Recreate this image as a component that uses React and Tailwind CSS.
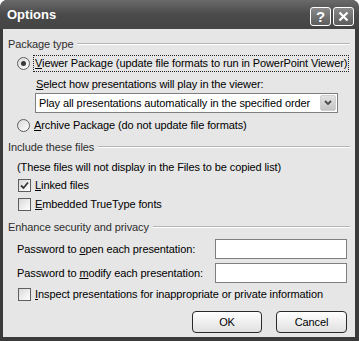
import React from 'react';

const font = { fontFamily: '"Liberation Sans", Arial, sans-serif' };

function GroupHeader({ label, className = '' }) {
    return (
        <div className={`flex items-center h-[16px] pl-[5px] pr-[5px] ${className}`}>
            <span className="text-[#2e2e2e] whitespace-nowrap">{label}</span>
            <div className="flex-1 ml-[4px] h-[2px] border-t border-[#b4b4b4] border-b border-b-white" />
        </div>
    );
}

function Radio({ checked }) {
    return (
        <div className="w-[13px] h-[13px] rounded-full border border-[#5e5e5e] bg-linear-to-br from-[#d8d8d8] to-white flex items-center justify-center shrink-0">
            {checked && <div className="w-[5px] h-[5px] rounded-full bg-[#3a3a3a]" />}
        </div>
    );
}

function Checkbox({ checked }) {
    return (
        <div className="w-[13px] h-[13px] border border-[#5e5e5e] bg-linear-to-br from-[#d9d9d9] to-white flex items-center justify-center shrink-0">
            {checked && (
                <svg width="9" height="9" viewBox="0 0 9 9">
                    <path d="M1 4.5 L3.5 7 L8 1.5" fill="none" stroke="#3a3a3a" strokeWidth="1.8" />
                </svg>
            )}
        </div>
    );
}

function U({ children }) {
    return <span className="underline underline-offset-[1px]">{children}</span>;
}

export default function App() {
    return (
        <div className="w-[359px] h-[341px] bg-[#3a3a3a] rounded-t-[7px] flex flex-col overflow-hidden text-[11px] tracking-[-0.1px] text-black leading-none" style={font}>
            {/* title bar */}
            <div className="h-[29px] shrink-0 flex items-center justify-between pl-[7px] pr-[5px] bg-linear-to-b from-[#6a6a6a] via-[#4a4a4a] to-[#444444] rounded-t-[7px]">
                <span className="text-white font-bold text-[13px] tracking-normal">Options</span>
                <div className="flex gap-[2px] pt-[3px]">
                    <div className="w-[21px] h-[19px] rounded-[3px] border border-white bg-linear-to-b from-[#8a8a8a] to-[#5c5c5c] flex items-center justify-center text-white font-bold text-[15px]">?</div>
                    <div className="w-[21px] h-[19px] rounded-[3px] border border-white bg-linear-to-b from-[#8a8a8a] to-[#5c5c5c] flex items-center justify-center">
                        <svg width="11" height="11" viewBox="0 0 11 11">
                            <path d="M1.5 1.5 L9.5 9.5 M9.5 1.5 L1.5 9.5" stroke="white" strokeWidth="2.2" />
                        </svg>
                    </div>
                </div>
            </div>

            {/* client area */}
            <div className="flex-1 ml-[3px] mr-[4px] mb-[4px] bg-[#e6e6e6] flex flex-col pt-[7px]">
                <GroupHeader label="Package type" />

                <div className="flex items-center h-[18px] mt-[2px] pl-[14px]">
                    <Radio checked />
                    <span className="ml-[3px] px-[1px] py-[2px] border border-dotted border-[#222] whitespace-nowrap">
                        <U>V</U>iewer Package (update file formats to run in PowerPoint Viewer)
                    </span>
                </div>

                <div className="flex items-center h-[16px] mt-[4px] pl-[33px]">
                    <span><U>S</U>elect how presentations will play in the viewer:</span>
                </div>

                <div className="ml-[32px] mr-[17px] mt-[1px] h-[20px] bg-white border border-[#7f7f7f] flex items-center pl-[3px] pr-[1px]">
                    <span className="flex-1 whitespace-nowrap">Play all presentations automatically in the specified order</span>
                    <div className="w-[16px] h-[16px] rounded-[2px] bg-linear-to-b from-[#e2e2e2] to-[#c4c4c4] border border-[#d0d0d0] flex items-center justify-center">
                        <svg width="8" height="6" viewBox="0 0 8 6">
                            <path d="M1 1 L4 4 L7 1" fill="none" stroke="#4a4a4a" strokeWidth="1.8" />
                        </svg>
                    </div>
                </div>

                <div className="flex items-center h-[18px] mt-[3px] pl-[14px]">
                    <Radio />
                    <span className="ml-[4px] whitespace-nowrap">
                        <U>A</U>rchive Package (do not update file formats)
                    </span>
                </div>

                <GroupHeader label="Include these files" className="mt-[5px]" />

                <div className="flex items-center h-[16px] mt-[4px] pl-[14px]">
                    <span>(These files will not display in the Files to be copied list)</span>
                </div>

                <div className="flex items-center h-[18px] mt-[1px] pl-[15px]">
                    <Checkbox checked />
                    <span className="ml-[4px]"><U>L</U>inked files</span>
                </div>

                <div className="flex items-center h-[18px] mt-[1px] pl-[15px]">
                    <Checkbox />
                    <span className="ml-[4px]"><U>E</U>mbedded TrueType fonts</span>
                </div>

                <GroupHeader label="Enhance security and privacy" className="mt-[6px]" />

                <div className="flex items-center h-[20px] mt-[4px] pl-[14px] pr-[8px]">
                    <span className="flex-1">Password to <U>o</U>pen each presentation:</span>
                    <div className="w-[132px] h-[20px] bg-white border border-[#7f7f7f]" />
                </div>

                <div className="flex items-center h-[20px] mt-[4px] pl-[14px] pr-[8px]">
                    <span className="flex-1">Password to <U>m</U>odify each presentation:</span>
                    <div className="w-[132px] h-[20px] bg-white border border-[#7f7f7f]" />
                </div>

                <div className="flex items-center h-[18px] mt-[2px] pl-[15px]">
                    <Checkbox />
                    <span className="ml-[4px] whitespace-nowrap"><U>I</U>nspect presentations for inappropriate or private information</span>
                </div>

                <div className="flex justify-end gap-[14px] mt-[8px] pr-[8px]">
                    <button className="w-[70px] h-[22px] rounded-[4px] border border-[#2a2a2a] bg-linear-to-b from-white to-[#e0e0e0] text-[11px]">OK</button>
                    <button className="w-[71px] h-[22px] rounded-[4px] border border-[#2a2a2a] bg-linear-to-b from-white to-[#e0e0e0] text-[11px]">Cancel</button>
                </div>
            </div>
        </div>
    );
}
